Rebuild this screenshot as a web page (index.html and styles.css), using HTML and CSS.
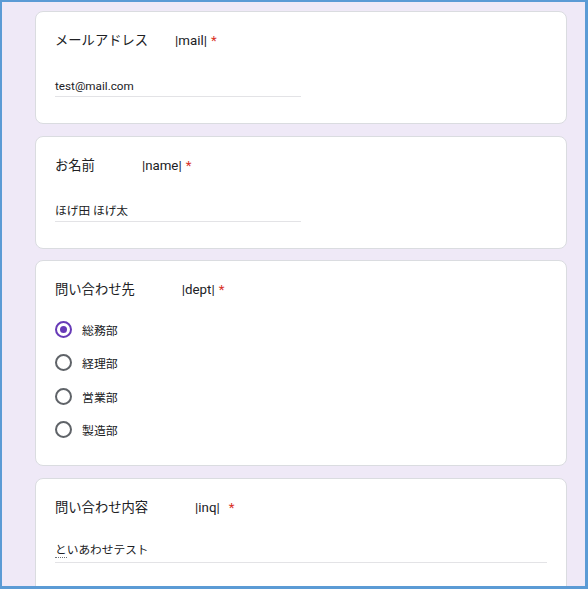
FILE: index.html
```html
<!DOCTYPE html>
<html lang="ja">
<head>
<meta charset="utf-8">
<title>フォーム</title>
<link rel="stylesheet" href="styles.css">
</head>
<body>
<div class="frame">
  <div class="cards">
    <section class="card">
      <div class="title"><span>メールアドレス</span><span class="label gap-narrow">|mail|</span><span class="req">*</span></div>
      <div class="input short">test@mail.com</div>
    </section>
    <section class="card">
      <div class="title"><span>お名前</span><span class="label gap-wide">|name|</span><span class="req">*</span></div>
      <div class="input short">ほげ田 ほげ太</div>
    </section>
    <section class="card">
      <div class="title"><span>問い合わせ先</span><span class="label gap-wide">|dept|</span><span class="req">*</span></div>
      <div class="options">
        <div class="option"><span class="radio checked"></span><span>総務部</span></div>
        <div class="option"><span class="radio"></span><span>経理部</span></div>
        <div class="option"><span class="radio"></span><span>営業部</span></div>
        <div class="option"><span class="radio"></span><span>製造部</span></div>
      </div>
    </section>
    <section class="card card-last">
      <div class="title"><span>問い合わせ内容</span><span class="label gap-wide">|inq|</span><span class="req req-far">*</span></div>
      <div class="input long"><span class="spell">と</span>いあわせテスト</div>
    </section>
  </div>
</div>
</body>
</html>
```

FILE: styles.css
```css
* { box-sizing: border-box; }
html, body {
  margin: 0;
  padding: 0;
  width: 588px;
  height: 589px;
  overflow: hidden;
}
body {
  font-family: Roboto, "Noto Sans CJK JP", sans-serif;
  color: #202124;
}
.frame {
  width: 588px;
  height: 589px;
  background: #efe9f7;
  border: 2px solid #5b9bd5;
  border-right-width: 3px;
  border-bottom-width: 3px;
  overflow: hidden;
  padding: 9px 0 0 33px;
}
.cards {
  width: 532px;
  display: flex;
  flex-direction: column;
  gap: 11.5px;
}
.card {
  background: #fff;
  border: 1px solid #dadce0;
  border-radius: 8px;
  padding: 19px 19px 26px;
}
.title {
  display: flex;
  align-items: center;
  height: 20px;
  font-size: 13.3px;
  line-height: 20px;
  white-space: nowrap;
}
.label { font-family: Roboto, sans-serif; }
.gap-narrow { margin-left: 27px; }
.gap-wide { margin-left: 47px; }
.req {
  color: #d93025;
  margin-left: 4px;
}
.req-far { margin-left: 9px; }
.input {
  margin-top: 26px;
  height: 20px;
  font-size: 11.7px;
  line-height: 18px;
  padding-bottom: 1px;
  border-bottom: 1px solid #e3e3e6;
  color: #202124;
  white-space: nowrap;
}
.short { width: 246px; }
.long {
  margin-top: 22px;
  height: 23px;
  line-height: 20px;
  padding-bottom: 2px;
}
.spell {
  border-bottom: 1px dotted #70757a;
}
.options {
  margin-top: 13px;
  margin-bottom: -7px;
  display: flex;
  flex-direction: column;
}
.option {
  height: 33.3px;
  display: flex;
  align-items: center;
  gap: 10px;
  font-size: 11.9px;
}
.radio {
  width: 17px;
  height: 17px;
  border: 2px solid #5f6368;
  border-radius: 50%;
  display: flex;
  align-items: center;
  justify-content: center;
  flex: none;
}
.radio.checked { border-color: #673ab7; }
.radio.checked::after {
  content: "";
  width: 7px;
  height: 7px;
  border-radius: 50%;
  background: #673ab7;
}
.card-last { padding-bottom: 40px; }
```
